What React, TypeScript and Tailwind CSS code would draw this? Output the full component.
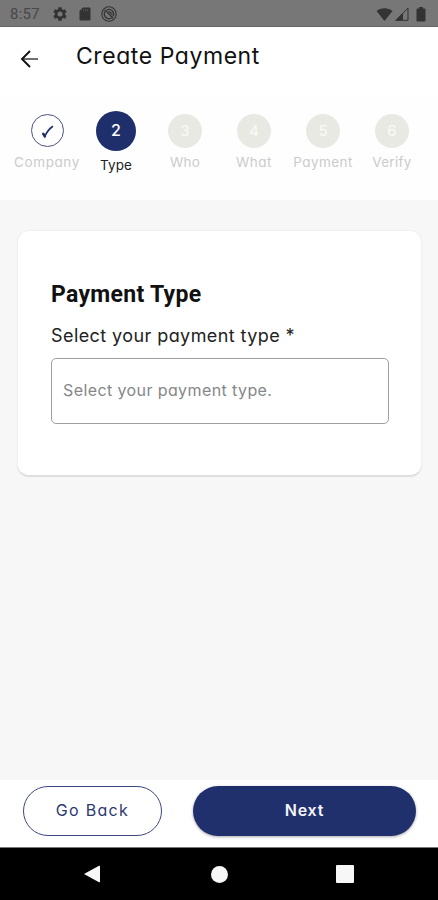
import clsx from 'clsx';

const steps = [
    { id: 1, label: 'Company', state: 'done', spacing: 'tracking-[0.6px]' },
    { id: 2, label: 'Type', state: 'active', spacing: 'tracking-[0.1px]' },
    { id: 3, label: 'Who', state: 'todo', spacing: 'tracking-[0.2px]' },
    { id: 4, label: 'What', state: 'todo', spacing: 'tracking-[0.55px]' },
    { id: 5, label: 'Payment', state: 'todo', spacing: 'tracking-[0.45px]' },
    { id: 6, label: 'Verify', state: 'todo', spacing: 'tracking-[0.3px]' },
];

function StatusBar() {
    return (
        <div className="h-[27px] shrink-0 bg-[#777777] border-b border-[#666666] flex items-center justify-between pl-[10px] pr-[8px] pt-[2px] text-[#333333]">
            <div className="flex items-center">
                <span className="w-[43px] font-['Roboto'] text-[15px] leading-none text-[#484848] tracking-[0.2px]">8:57</span>
                <svg width="14" height="14" viewBox="2 2 20 20" fill="currentColor">
                    <path d="M19.14 12.94c.04-.3.06-.61.06-.94 0-.32-.02-.64-.07-.94l2.03-1.58a.49.49 0 0 0 .12-.61l-1.92-3.32a.49.49 0 0 0-.59-.22l-2.39.96a7 7 0 0 0-1.62-.94l-.36-2.54a.48.48 0 0 0-.48-.41h-3.84a.47.47 0 0 0-.47.41l-.36 2.54c-.59.24-1.13.57-1.62.94l-2.39-.96a.48.48 0 0 0-.59.22L2.74 8.87a.47.47 0 0 0 .12.61l2.03 1.58c-.05.3-.09.63-.09.94s.02.64.07.94l-2.03 1.58a.49.49 0 0 0-.12.61l1.92 3.32c.12.22.37.29.59.22l2.39-.96c.5.38 1.03.7 1.62.94l.36 2.54c.05.24.24.41.48.41h3.84c.24 0 .44-.17.47-.41l.36-2.54a7 7 0 0 0 1.62-.94l2.39.96c.22.08.47 0 .59-.22l1.92-3.32a.47.47 0 0 0-.12-.61zM12 15.6a3.6 3.6 0 1 1 0-7.2 3.6 3.6 0 0 1 0 7.2z" />
                </svg>
                <svg className="ml-[12px]" width="12" height="14" viewBox="0 0 12 14">
                    <path d="M4 .5h6.5a1 1 0 0 1 1 1v11a1 1 0 0 1-1 1h-9a1 1 0 0 1-1-1V4z" fill="currentColor" />
                    <path d="M4.5 2.2v2M6.5 2.2v2M8.5 2.2v2" stroke="#5c5c5c" strokeWidth=".8" />
                </svg>
                <svg className="ml-[10px]" width="16" height="16" viewBox="0 0 16 16" fill="none" stroke="currentColor">
                    <circle cx="8" cy="8" r="7.2" strokeWidth="1.1" />
                    <path d="M4.3 5.2A4.7 4.7 0 0 0 10.8 11.8" strokeWidth="1.3" />
                    <path d="M5.8 3.9A4.7 4.7 0 0 1 12.1 10.2" strokeWidth="1.3" />
                    <path d="M3.8 3.8l8.4 8.4" strokeWidth="1.3" />
                    <path d="M7.5 5.5a2.6 2.6 0 0 1 3 3z" fill="currentColor" strokeWidth=".5" />
                </svg>
            </div>
            <div className="flex items-center">
                <svg width="17" height="13" viewBox="0 0 17 13" fill="currentColor">
                    <path d="M8.5 13L.5 3C5-.6 12-.6 16.5 3z" />
                </svg>
                <svg className="ml-[2px]" width="14" height="14" viewBox="0 0 14 14">
                    <path d="M.8 13.3L13 1.2v12.1z" fill="#777777" stroke="currentColor" strokeWidth="1" />
                    <path d="M.5 13.5L8 6v7.5z" fill="currentColor" />
                </svg>
                <svg className="ml-[7px] mr-[4px]" width="10" height="15" viewBox="0 0 10 15" fill="currentColor">
                    <path d="M3 0h4v1.5h1.500a1 1 0 0 1 1 1v11a1 1 0 0 1-1 1h-7a1 1 0 0 1-1-1v-11a1 1 0 0 1 1-1H3z" />
                </svg>
            </div>
        </div>
    );
}

function Header() {
    return (
        <header className="h-[67px] shrink-0 bg-white flex items-center pl-[20px] pb-[9px]">
            <svg width="19" height="20" viewBox="0 0 19 20" className="mt-[5px]" fill="none" stroke="#111111">
                <path d="M2 10h16" stroke="#555555" strokeWidth="1.7" />
                <path d="M10 2l-8 8 8 8" strokeWidth="1.9" />
            </svg>
            <h1 className="ml-[37px] text-[23px] leading-none tracking-[0.56px] text-[#111111]">Create Payment</h1>
        </header>
    );
}

function Stepper() {
    return (
        <div className="h-[106px] shrink-0 bg-[#fefefe] grid grid-cols-6 items-start px-[12px] pt-[17px]">
            {steps.map((step) => (
                <div key={step.id} className="flex flex-col items-center pl-px">
                    <div
                        className={clsx(
                            'rounded-full flex items-center justify-center',
                            step.state === 'done' && 'mt-[3px] w-[33px] h-[33px] border border-[#4a5286] bg-white',
                            step.state === 'active' && 'w-[40px] h-[40px] bg-[#1f2f6b] text-white text-[16px] font-medium pb-[3px]',
                            step.state === 'todo' && 'mt-[3px] w-[34px] h-[34px] bg-[#e9e9e3] text-[#fafaf6] text-[15px]',
                        )}
                    >
                        {step.state === 'done' ? (
                            <svg className="mt-[2px]" width="13" height="14" viewBox="0 0 13 14" fill="none" stroke="#1f2f6b">
                                <path d="M2.3 8.8L3.8 11.3" strokeWidth="2.6" strokeLinecap="round" />
                                <path d="M3.8 11.5C5.5 7.5 8 4 11.5 1.5" strokeWidth="1.6" strokeLinecap="round" />
                            </svg>
                        ) : (
                            step.id
                        )}
                    </div>
                    <span
                        className={clsx(
                            'text-[13.5px] leading-[16px] whitespace-nowrap',
                            step.spacing,
                            step.state === 'active' ? 'mt-[6px] text-[#222222]' : 'text-[#cbcbcb]',
                            step.state === 'done' && 'mt-[7px]',
                            step.state === 'todo' && 'mt-[6px]',
                        )}
                    >
                        {step.label}
                    </span>
                </div>
            ))}
        </div>
    );
}

export default function App() {
    return (
        <div className="h-[900px] w-full flex flex-col overflow-hidden bg-[#f7f7f7] font-['Inter',sans-serif] [font-feature-settings:'cv11']">
            <StatusBar />
            <Header />
            <Stepper />

            <main className="flex-1 px-[17px] pt-[30px]">
                <section className="h-[246px] w-[405px] bg-white rounded-[12px] border border-[#f0f0f0] border-b-[#dedede] shadow-[0_1px_1px_rgba(0,0,0,0.1)] px-[33px] pt-[51px]">
                    <h2 className="font-['Roboto'] font-bold text-[23px] leading-[26px] tracking-[0.3px] text-[#111111]">Payment Type</h2>
                    <label className="block mt-[17px] text-[18px] leading-[22px] tracking-[0.42px] text-[#222222]">Select your payment type *</label>
                    <button className="mt-[11px] w-[338px] h-[66px] border border-[#a0a0a0] rounded-[5px] text-left pl-[11px] pb-[2px] text-[16px] tracking-[0.4px] text-[#858789]">
                        Select your payment type.
                    </button>
                </section>
            </main>

            <footer className="h-[67px] shrink-0 bg-white flex pt-[6px] pl-[23px] gap-[31px]">
                <button className="w-[139px] h-[50px] rounded-full border border-[#3b467f] text-[#2c3871] text-[16px] tracking-[1.3px] pb-[2px]">
                    Go Back
                </button>
                <button className="w-[223px] h-[50px] rounded-full bg-[#20306c] text-[#f4f5fa] text-[16px] font-semibold tracking-[0.8px] pb-[3px] shadow-[0_1px_3px_rgba(0,0,0,0.35)]">
                    Next
                </button>
            </footer>

            <nav className="h-[53px] shrink-0 bg-black border-t border-[#777777] flex items-center pl-[83px] text-[#f7f7f7]">
                <svg width="18" height="18" viewBox="0 0 18 18" fill="currentColor">
                    <path d="M1 9L16 .8q1-.4 1 .6v15.2q0 1-1 .6z" />
                </svg>
                <div className="ml-[110px] size-[17px] rounded-full bg-[#f7f7f7]" />
                <div className="ml-[108px] size-[18px] rounded-[1px] bg-[#f7f7f7]" />
            </nav>
        </div>
    );
}
